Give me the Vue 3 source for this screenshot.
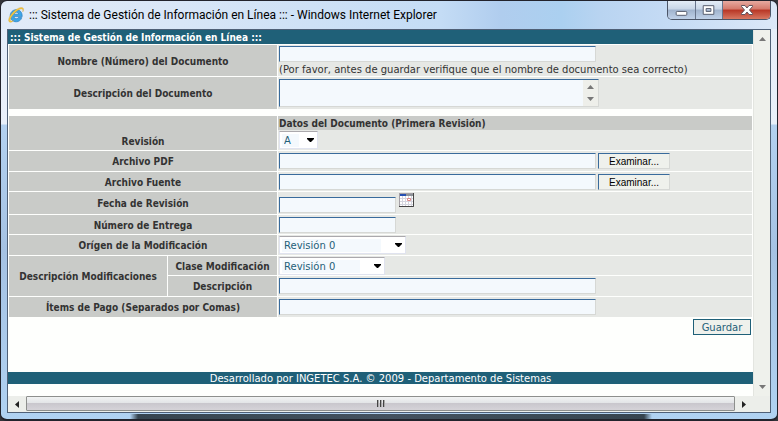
<script setup>
import { ref } from 'vue'

const nombre = ref('')
const descripcion = ref('')
const revision = ref('A')
const pdf = ref('')
const fuente = ref('')
const fecha = ref('')
const entrega = ref('')
const origen = ref('Revisión 0')
const clase = ref('Revisión 0')
const detalle = ref('')
const items = ref('')
</script>

<template>
  <div class="window">
    <header class="titlebar">
      <svg class="logo" viewBox="0 0 16 16" aria-hidden="true">
        <path d="M14.200 9.600H6.100c.1 1.400 1 2.100 2.200 2.100 1 0 1.600-.4 2-1.100h3.500c-.8 2.700-2.900 4.200-5.600 4.200-3.500 0-6-2.500-6-6 0-3.500 2.600-6.100 6.100-6.100 3.800 0 6.100 2.700 5.900 6.900zM10.500 7.200C10.400 6 9.600 5.200 8.400 5.200S6.300 5.900 6.100 7.200z" fill="#3da5e6" stroke="#1a74bc" stroke-width=".6" />
        <path d="M2 15.300C-1 14.200 1.200 9 5.200 4.900 9.200 1 14-.5 15.200 1.200c.6.900.3 2.300-.4 3.700.3-1.600.1-2.600-.8-2.900-1.800-.5-5.300 1.700-7.800 4.600C3.200 9.600 1.400 13.200 2.800 13.900c.7.300 1.900 0 2.900-.5-1.200 1.200-2.700 2.200-3.700 1.900z" fill="#f6c83e" stroke="#c9952a" stroke-width=".3" />
      </svg>
      <h1 class="caption">::: Sistema de Gestión de Información en Línea ::: - Windows Internet Explorer</h1>
      <div class="controls">
        <button type="button" class="ctl min" aria-label="Minimizar">
          <svg viewBox="0 0 28 18"><rect x="8.500" y="10.500" width="11" height="4" rx="1" fill="#fff" stroke="#555c6c" /></svg>
        </button>
        <button type="button" class="ctl max" aria-label="Maximizar">
          <svg viewBox="0 0 27 18"><path d="M7.500 4.500h11v9h-11zM10.500 7.500v3h5v-3z" fill="#fff" fill-rule="evenodd" stroke="#555c6c" /></svg>
        </button>
        <button type="button" class="ctl close" aria-label="Cerrar">
          <svg viewBox="0 0 47 18"><path d="M18.500 4.500h3.500l2 2.500 2-2.500h3.500v1L26.500 9l3 3.500v1H26L24 11l-2 2.500h-3.500v-1l3-3.500-3-3.500z" fill="#fff" stroke="#62535c" /></svg>
        </button>
      </div>
    </header>

    <div class="client">
      <div class="viewport">
        <main class="page">
          <h2 class="banner">::: Sistema de Gestión de Información en Línea :::</h2>
          <form @submit.prevent>
            <table class="form">
              <colgroup><col class="c1" /><col class="c2" /><col /></colgroup>
              <tbody>
                <tr class="r31">
                  <th colspan="2"><label for="nombre">Nombre (Número) del Documento</label></th>
                  <td>
                    <input id="nombre" v-model="nombre" class="field long" type="text" />
                    <p class="hint">(Por favor, antes de guardar verifique que el nombre de documento sea correcto)</p>
                  </td>
                </tr>
                <tr class="r32">
                  <th colspan="2"><label for="descripcion">Descripción del Documento</label></th>
                  <td>
                    <div class="area">
                      <textarea id="descripcion" v-model="descripcion"></textarea>
                      <div class="spin" aria-hidden="true">
                        <svg viewBox="0 0 7 4"><path d="M0 4l3.500-4L7 4z" fill="#777" /></svg>
                        <svg viewBox="0 0 7 4"><path d="M0 0h7L3.500 4z" fill="#777" /></svg>
                      </div>
                    </div>
                  </td>
                </tr>
              </tbody>
            </table>

            <table class="form second">
              <colgroup><col class="c1" /><col class="c2" /><col /></colgroup>
              <tbody>
                <tr class="r34">
                  <th colspan="2" class="low"><label for="revision">Revisión</label></th>
                  <td class="grouped">
                    <h3 class="group">Datos del Documento (Primera Revisión)</h3>
                    <div class="pick tiny">
                      <select id="revision" v-model="revision"><option>A</option></select>
                      <svg viewBox="0 0 7 4"><path d="M0 0h7v1L4 4H3L0 1z" /></svg>
                    </div>
                  </td>
                </tr>
                <tr class="r20">
                  <th colspan="2"><label for="pdf">Archivo PDF</label></th>
                  <td>
                    <div class="line">
                      <input id="pdf" v-model="pdf" class="field long" type="text" />
                      <button type="button" class="browse">Examinar...</button>
                    </div>
                  </td>
                </tr>
                <tr class="r19">
                  <th colspan="2"><label for="fuente">Archivo Fuente</label></th>
                  <td>
                    <div class="line">
                      <input id="fuente" v-model="fuente" class="field long" type="text" />
                      <button type="button" class="browse">Examinar...</button>
                    </div>
                  </td>
                </tr>
                <tr class="r22">
                  <th colspan="2"><label for="fecha">Fecha de Revisión</label></th>
                  <td>
                    <div class="line dates">
                      <input id="fecha" v-model="fecha" class="field short" type="text" />
                      <button type="button" class="calendar" aria-label="Calendario">
                        <svg viewBox="0 0 15 14">
                          <path d="M0 0h15v14H0z" fill="#a4a0a6" />
                          <path d="M1 3h13v10H1z" fill="#fff" />
                          <path d="M1 1h6v2H1z" fill="#244fb2" />
                          <path d="M7 1h7v2H7z" fill="#8e9399" />
                          <path d="M3.500 3v10M6.500 3v10M9.500 3v10M12.500 3v10M1 5.500h13M1 8.500h13M1 11.500h13" stroke="#d5d5df" />
                          <path d="M8.500 5.500h3v2h-3z" fill="#fff" stroke="#d88" />
                          <path d="M14.500 0v13.500H0" fill="none" stroke="#454545" />
                        </svg>
                      </button>
                    </div>
                  </td>
                </tr>
                <tr class="r19">
                  <th colspan="2"><label for="entrega">Número de Entrega</label></th>
                  <td><input id="entrega" v-model="entrega" class="field short" type="text" /></td>
                </tr>
                <tr class="r20">
                  <th colspan="2"><label for="origen">Orígen de la Modificación</label></th>
                  <td>
                    <div class="pick wide">
                      <select id="origen" v-model="origen"><option>Revisión 0</option></select>
                      <svg viewBox="0 0 7 4"><path d="M0 0h7v1L4 4H3L0 1z" /></svg>
                    </div>
                  </td>
                </tr>
                <tr class="r19">
                  <th rowspan="2">Descripción Modificaciones</th>
                  <th><label for="clase">Clase Modificación</label></th>
                  <td>
                    <div class="pick medium">
                      <select id="clase" v-model="clase"><option>Revisión 0</option></select>
                      <svg viewBox="0 0 7 4"><path d="M0 0h7v1L4 4H3L0 1z" /></svg>
                    </div>
                  </td>
                </tr>
                <tr class="r20">
                  <th><label for="detalle">Descripción</label></th>
                  <td><input id="detalle" v-model="detalle" class="field long" type="text" /></td>
                </tr>
                <tr class="r20">
                  <th colspan="2"><label for="items">Ítems de Pago (Separados por Comas)</label></th>
                  <td><input id="items" v-model="items" class="field long" type="text" /></td>
                </tr>
              </tbody>
            </table>
            <div class="actions"><button type="submit" class="save">Guardar</button></div>
          </form>
          <footer class="credits">Desarrollado por INGETEC S.A. © 2009 - Departamento de Sistemas</footer>
        </main>
        <div class="vbar" aria-hidden="true">
          <svg viewBox="0 0 7 4"><path d="M0 4l3.500-4L7 4z" fill="#777" /></svg>
          <svg viewBox="0 0 7 4"><path d="M0 0h7L3.500 4z" fill="#777" /></svg>
        </div>
      </div>
      <div class="hbar" aria-hidden="true">
        <span class="arrow"><svg viewBox="0 0 4 7"><path d="M4 0v7L0 3.500z" fill="#222" /></svg></span>
        <span class="thumb"><i></i><i></i><i></i></span>
        <span class="arrow"><svg viewBox="0 0 4 7"><path d="M0 0v7l4-3.500z" fill="#222" /></svg></span>
        <span class="corner"></span>
      </div>
    </div>
  </div>
</template>

<style>
body {
  background: #34343a;
}
</style>

<style scoped>
* {
  box-sizing: border-box;
}

.window {
  display: flex;
  flex-direction: column;
  min-height: 100vh;
  padding: 0 6px 6px;
  border: 1px solid #22232c;
  border-bottom-width: 2px;
  border-radius: 7px;
  background:
    linear-gradient(90deg, transparent 129px, #36444f 137px, #43525f 50%, #36444f calc(100% - 133px), transparent calc(100% - 125px)) bottom / 100% 5px no-repeat,
    linear-gradient(90deg, #e2ebf8, #d8e6f7 180px, #c4dcf5 440px, #b0cdee 500px, #abd0f0 560px, #b9d4f1 600px, #c7dcf5 680px, #dce8f8) top / 100% 28px no-repeat,
    linear-gradient(#e4edf9 0, #e9f0fa 123px, #b3d1f0 124px, #a5c2e3 250px, #b0d2f2);
}

.titlebar {
  display: flex;
  align-items: flex-start;
  height: 28px;
  padding-left: 1px;
}

.logo {
  width: 16px;
  height: 16px;
  margin-top: 6px;
}

.caption {
  flex: 1;
  margin: 0;
  padding: 5px 0 0 5px;
  font: 12px/18px Roboto, "Open Sans", sans-serif;
  color: #000;
  white-space: nowrap;
}

.controls {
  display: flex;
  border: 1px solid #4b5567;
  border-top: 0;
  border-radius: 0 0 5px 5px;
  overflow: hidden;
}

.ctl {
  height: 18px;
  padding: 0;
  border: 0;
  border-right: 1px solid #68758c;
  background: linear-gradient(#e4edf7 0, #c8d6e7 45%, #a0b3cd 50%, #bfd1e8);
}

.ctl svg {
  display: block;
  width: 100%;
  height: 18px;
}

.min {
  width: 28px;
}

.max {
  width: 27px;
}

.close {
  width: 47px;
  border-right: 0;
  background: linear-gradient(#e7aaa0 0, #d4796b 45%, #b83625 50%, #d77862);
}

.client {
  display: flex;
  flex: 1;
  flex-direction: column;
  border: 1px solid #4f6077;
  background: #fff;
}

.viewport {
  display: flex;
  flex: 1;
}

.page {
  flex: 1;
  min-width: 0;
  background: #fefffd;
  color: #333;
  font: 10px/12px "DejaVu Sans", Verdana, sans-serif;
}

.banner {
  margin: 0;
  padding: 1px 0 0 2px;
  background: #1f6078;
  color: #fff;
  font: bold 10px/13px "DejaVu Sans Condensed", "DejaVu Sans", sans-serif;
}

.form {
  width: 100%;
  border-spacing: 1px;
  table-layout: fixed;
}

.second {
  margin-top: 5px;
}

.c1 {
  width: 158px;
}

.c2 {
  width: 109px;
}

th {
  padding: 2px 0 0;
  background: #c9cbc8;
  color: #333;
  font: bold 10px/12px "DejaVu Sans Condensed", "DejaVu Sans", sans-serif;
  text-align: center;
}

td {
  padding: 0 1px;
  background: #e6e8e5;
  vertical-align: middle;
}

.r19 {
  height: 19px;
}

.r20 {
  height: 20px;
}

.r22 {
  height: 22px;
}

.r31 {
  height: 31px;
}

.r32 {
  height: 32px;
}

.r34 {
  height: 34px;
}

.low {
  padding-bottom: 2px;
  vertical-align: bottom;
}

.field {
  display: block;
  height: 16px;
  margin: 0;
  padding: 0 2px;
  border: 1px solid #d6d8d5;
  border-top-color: #396b9c;
  border-left-color: #396b9c;
  background: #f4f9fd;
  color: #1f6078;
  font: inherit;
  outline: 0;
}

.long {
  width: 317px;
}

.short {
  width: 117px;
}

.hint {
  margin: 0;
  padding-top: 2px;
  white-space: nowrap;
}

.area {
  display: flex;
  width: 320px;
  height: 28px;
  border: 1px solid #d6d8d5;
  border-top-color: #396b9c;
  border-left-color: #396b9c;
  background: #f4f9fd;
}

.area textarea {
  flex: 1;
  min-width: 0;
  margin: 0;
  padding: 1px 2px;
  border: 0;
  background: transparent;
  font: inherit;
  resize: none;
  outline: 0;
}

.spin {
  display: flex;
  flex-direction: column;
  align-items: center;
  justify-content: space-between;
  width: 15px;
  padding: 5px 0;
  background: #eeefea;
}

.spin svg,
.vbar svg {
  width: 7px;
  height: 4px;
}

.grouped {
  padding: 0;
  vertical-align: top;
}

.group {
  margin: 0;
  padding: 1px 0 0 1px;
  background: #c9cbc8;
  font: bold 10px/13px "DejaVu Sans Condensed", "DejaVu Sans", sans-serif;
}

.grouped .pick {
  margin: 1px;
}

.pick {
  display: flex;
  align-items: center;
  height: 18px;
  padding-right: 3px;
  border: 1px solid #e0e3ef;
  border-top-color: #aba9ad;
  background: #fff;
}

.pick select {
  flex: 1;
  align-self: stretch;
  min-width: 0;
  margin: 2px 14px 1px 2px;
  padding: 1px 0 0 2px;
  border: 0;
  background: #f4f9fd;
  color: #1f6078;
  font: 10px/12px "DejaVu Sans", Verdana, sans-serif;
  appearance: none;
  outline: 0;
}

.pick svg {
  width: 7px;
  height: 4px;
}

.tiny {
  width: 39px;
}

.tiny select {
  margin-right: 8px;
}

.medium {
  width: 106px;
}

.wide {
  width: 127px;
}

.line {
  display: flex;
  gap: 2px;
}

.dates {
  align-items: flex-end;
  gap: 3px;
}

.browse {
  width: 72px;
  height: 16px;
  padding: 1px 0 0;
  border: 1px solid #d6d8d5;
  border-top-color: #396b9c;
  border-left-color: #396b9c;
  background: #eff1ec;
  color: #000;
  font: 10px/13px "Liberation Sans", Arial, sans-serif;
}

.calendar {
  height: 20px;
  padding: 0 0 6px;
  border: 0;
  background: none;
}

.calendar svg {
  display: block;
  width: 15px;
  height: 14px;
}

.actions {
  display: flex;
  justify-content: flex-end;
  padding: 1px 2px 0;
}

.save {
  width: 58px;
  height: 16px;
  padding: 1px 0 0;
  border: 1px solid #1f6078;
  background: #eff1ec;
  color: #1f6078;
  font: 10px/12px "DejaVu Sans", Verdana, sans-serif;
}

.credits {
  margin-top: 37px;
  padding-top: 1px;
  background: #1f6078;
  color: #fff;
  line-height: 11px;
  text-align: center;
}

.vbar {
  display: flex;
  flex-direction: column;
  align-items: center;
  justify-content: space-between;
  width: 17px;
  padding: 7px 0;
  border-left: 1px solid #e3e5e0;
  background: #eff1ec;
}

.hbar {
  display: flex;
  height: 16px;
  background: #eceeea;
}

.arrow {
  display: flex;
  align-items: center;
  justify-content: center;
  width: 18px;
}

.arrow svg {
  width: 4px;
  height: 7px;
}

.thumb {
  display: flex;
  flex: 1;
  align-items: center;
  justify-content: center;
  gap: 1px;
  height: 15px;
  border: 1px solid #8d8f8d;
  border-radius: 1px;
  background: linear-gradient(#f1f3f3, #e3e5e7 45%, #c9c7cd 50%, #d5d3d8);
}

.thumb i {
  width: 2px;
  height: 7px;
  background: linear-gradient(90deg, #444 50%, #aaa 50%);
}

.corner {
  width: 17px;
}
</style>
